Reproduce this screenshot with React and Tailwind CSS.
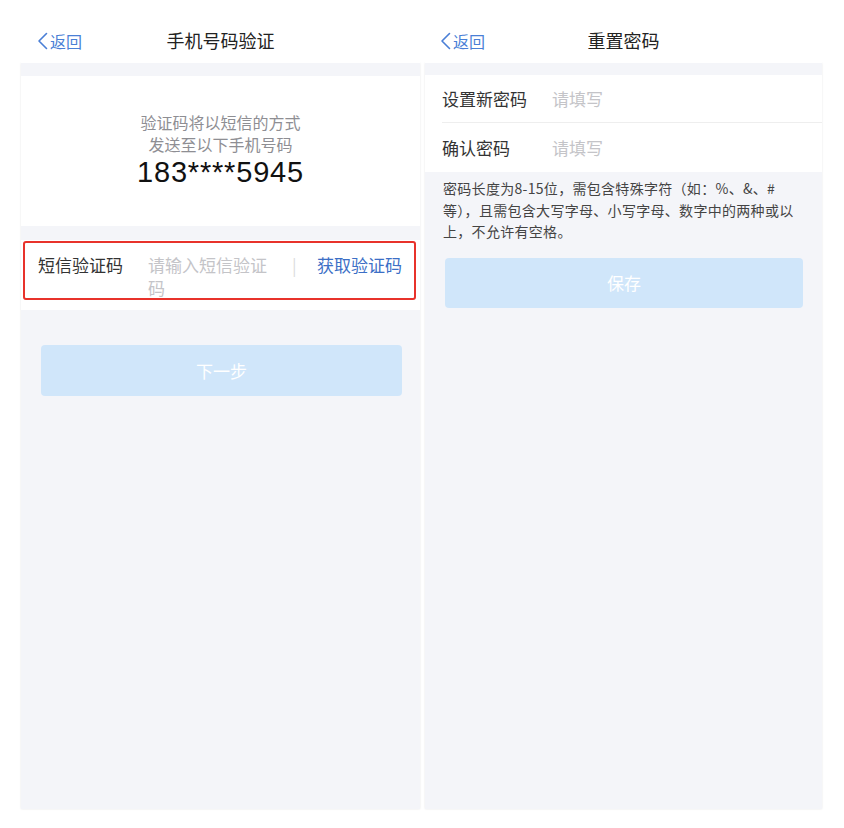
import React from 'react';

const font = { fontFamily: '"Noto Sans CJK SC", "Noto Sans", sans-serif' };

const Back = () => (
  <div className="flex items-center text-[16px] text-[#4a7fd6]">
    <svg width="12" height="18" viewBox="0 0 12 18" fill="none" className="mr-[1px]">
      <path d="M9.5 1.5L2 9l7.5 7.5" stroke="currentColor" strokeWidth="1.6" strokeLinecap="round" strokeLinejoin="round" />
    </svg>
    <span>返回</span>
  </div>
);

const Header = ({ title, backPad }) => (
  <div className="relative h-[63px] pt-[18px] flex items-center bg-white">
    <div className={backPad}>
      <Back />
    </div>
    <div className="absolute left-0 right-0 top-[18px] bottom-0 flex items-center justify-center text-[18px] text-[#222] pointer-events-none">
      {title}
    </div>
  </div>
);

const PhoneVerify = () => (
  <div className="w-[399px] flex flex-col">
    <Header title="手机号码验证" backPad="pl-[16px]" />
    <div className="h-[746px] bg-[#f4f5f9] shadow-[0_0_2px_rgba(0,0,0,0.10)]">
      <div className="h-[13px]" />
      <div className="h-[150px] bg-white pt-[35px] flex flex-col items-center">
        <div className="text-[16px] leading-[22px] text-[#8e8e93]">验证码将以短信的方式</div>
        <div className="text-[16px] leading-[22px] text-[#8e8e93]">发送至以下手机号码</div>
        <div
          className="mt-[2px] text-[29px] leading-[31px] tracking-[0.8px] text-[#111]"
          style={{ fontFamily: '"Liberation Sans", "Noto Sans CJK SC", sans-serif' }}
        >
          183****5945
        </div>
      </div>
      <div className="h-[14px]" />
      <div className="relative h-[70px] bg-white pt-[13px] pl-[17px] flex items-start text-[17px] leading-[23px]">
        <div className="w-[110px] text-[#333]">短信验证码</div>
        <div className="w-[126px] text-[#c4c4c8]">请输入短信验证码</div>
        <div className="ml-[18px] w-[20px] text-[#dcdcdc]">|</div>
        <div className="ml-[5px] text-[#3c6fc6]">获取验证码</div>
        <div className="absolute left-[2px] right-[4px] top-[1px] bottom-[10px] border-2 border-[#e8322b] rounded-[3px]" />
      </div>
      <div className="mt-[35px] ml-[20px] mr-[18px] h-[51px] rounded-[4px] bg-[#d0e6fa] flex items-center justify-center text-[17px] text-white">
        下一步
      </div>
    </div>
  </div>
);

const ResetPassword = () => (
  <div className="w-[397px] flex flex-col">
    <Header title="重置密码" backPad="pl-[15px]" />
    <div className="h-[746px] bg-[#f4f5f9] shadow-[0_0_2px_rgba(0,0,0,0.10)]">
      <div className="h-[12px]" />
      <div className="bg-white text-[17px]">
        <div className="ml-[17px] h-[48px] flex items-center border-b border-[#eeeeee]">
          <div className="w-[110px] text-[#333]">设置新密码</div>
          <div className="text-[#c4c4c8]">请填写</div>
        </div>
        <div className="ml-[17px] h-[49px] flex items-center">
          <div className="w-[110px] text-[#333]">确认密码</div>
          <div className="text-[#c4c4c8]">请填写</div>
        </div>
      </div>
      <div className="pt-[6px] pl-[18px] text-[14px] leading-[21.5px] tracking-[0.3px] text-[#444]">
        <div>密码长度为8-15位，需包含特殊字符（如：%、&、#</div>
        <div>等），且需包含大写字母、小写字母、数字中的两种或以</div>
        <div>上，不允许有空格。</div>
      </div>
      <div className="mt-[15px] ml-[20px] w-[358px] h-[50px] rounded-[4px] bg-[#d0e6fa] flex items-center justify-center text-[17px] text-white">
        保存
      </div>
    </div>
  </div>
);

export default function App() {
  return (
    <div className="w-[844px] h-[828px] bg-white flex items-start pl-[21px] gap-[5px]" style={font}>
      <PhoneVerify />
      <ResetPassword />
    </div>
  );
}
